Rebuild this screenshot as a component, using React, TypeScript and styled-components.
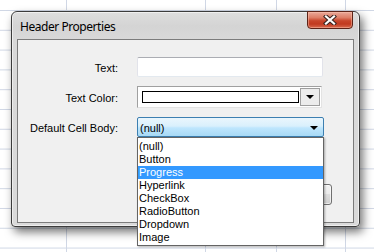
import React from 'react';
import styled, { createGlobalStyle } from 'styled-components';

const GRID = '#d0d7e5';

const GlobalStyle = createGlobalStyle`
  html, body {
    margin: 0;
    padding: 0;
    width: 374px;
    height: 252px;
    overflow: hidden;
  }
  body {
    font-family: "Liberation Sans", Arial, sans-serif;
    font-size: 11px;
    color: #000;
  }
`;

const items = ['(null)', 'Button', 'Progress', 'Hyperlink', 'CheckBox', 'RadioButton', 'Dropdown', 'Image'];

function vline(x: number) {
  return `linear-gradient(to right, transparent ${x}px, ${GRID} ${x}px, ${GRID} ${x + 1}px, transparent ${x + 1}px)`;
}

export default function App() {
  return (
    <>
      <GlobalStyle />
      <Sheet>
        <Window>
          <TitleBar>
            <Title>Header Properties</Title>
            <CloseButton aria-label="Close">
              <svg width="14" height="10" viewBox="0 0 14 10">
                <path d="M3 1.5 L11 8.5 M11 1.5 L3 8.5" stroke="#3a2420" strokeWidth="4.2" strokeLinecap="square" fill="none" />
                <path d="M3 1.5 L11 8.5 M11 1.5 L3 8.5" stroke="#ffffff" strokeWidth="2.2" strokeLinecap="square" fill="none" />
              </svg>
            </CloseButton>
          </TitleBar>
          <Client>
            <Form>
              <Label>Text:</Label>
              <TextInput />
              <Label>Text Color:</Label>
              <ColorCombo>
                <ColorField>
                  <Swatch />
                </ColorField>
                <ComboButton>
                  <Arrow />
                </ComboButton>
              </ColorCombo>
              <Label>Default Cell Body:</Label>
              <SelectWrap>
                <Select>
                  <span>(null)</span>
                  <Arrow />
                </Select>
                <List>
                  {items.map((item) => (
                    <Item key={item} selected={item === 'Progress'}>
                      {item}
                    </Item>
                  ))}
                </List>
              </SelectWrap>
            </Form>
            <Footer>
              <PushButton>OK</PushButton>
              <PushButton>Cancel</PushButton>
            </Footer>
          </Client>
        </Window>
      </Sheet>
    </>
  );
}

const Sheet = styled.div`
  width: 374px;
  height: 252px;
  box-sizing: border-box;
  padding: 11px 0 0 11px;
  background-color: #fff;
  background-image: ${vline(66)}, ${vline(205)}, ${vline(276)}, ${vline(345)},
    linear-gradient(to bottom, ${GRID} 1px, transparent 1px);
  background-size: 100% 100%, 100% 100%, 100% 100%, 100% 100%, 100% 19.8px;
  background-position: 0 0, 0 0, 0 0, 0 0, 0 10px;
`;

const Window = styled.div`
  width: 349px;
  height: 216px;
  box-sizing: border-box;
  display: flex;
  flex-direction: column;
  border: 1px solid #3c3c3c;
  border-radius: 6px 6px 4px 4px;
  background: linear-gradient(to bottom, #dedede 0px, #d4d4d4 14px, #d9d9d9 28px, #dadada 100%);
  box-shadow: inset 0 0 0 1px rgba(255, 255, 255, 0.55), 3px 5px 10px rgba(0, 0, 0, 0.55);
`;

const TitleBar = styled.div`
  height: 27px;
  display: flex;
  align-items: flex-start;
  padding-left: 8px;
`;

const Title = styled.div`
  font-family: "Noto Sans", "Open Sans", sans-serif;
  font-size: 12px;
  line-height: 15px;
  padding-top: 7px;
  color: #000;
  letter-spacing: -0.45px;
`;

const CloseButton = styled.div`
  margin: -1px 6px 0 auto;
  width: 46px;
  height: 18px;
  box-sizing: border-box;
  display: flex;
  align-items: center;
  justify-content: center;
  border: 1px solid #5c2318;
  border-radius: 0 0 4px 4px;
  background: linear-gradient(
    to bottom,
    #e9a99a 0%,
    #dd7e67 35%,
    #c8452b 55%,
    #c13a20 75%,
    #d86a4f 100%
  );
  box-shadow: inset 0 0 0 1px rgba(255, 200, 180, 0.45);
`;

const Client = styled.div`
  flex: 1;
  margin: 0 5px 3px 5px;
  display: flex;
  flex-direction: column;
  border: 1px solid #7c7c7c;
  background: #f0f0f0;
`;

const Form = styled.div`
  display: grid;
  grid-template-columns: 100px auto;
  column-gap: 19px;
  row-gap: 9px;
  align-items: center;
  justify-items: start;
  padding-top: 17px;
`;

const Label = styled.div`
  justify-self: end;
  font-size: 11px;
  line-height: 13px;
  padding-top: 2px;
  white-space: nowrap;
`;

const TextInput = styled.div`
  width: 186px;
  height: 20px;
  box-sizing: border-box;
  background: #fff;
  border: 1px solid #e2e3ea;
  border-top-color: #abadb3;
  border-bottom-color: #e3e9ef;
  border-radius: 2px;
`;

const ColorCombo = styled.div`
  width: 185px;
  height: 22px;
  box-sizing: border-box;
  display: flex;
  align-items: stretch;
  background: #fff;
  border: 1px solid #a0a0a0;
  border-right-color: #e3e3e3;
  border-bottom-color: #e3e3e3;
`;

const ColorField = styled.div`
  flex: 1;
  display: flex;
  align-items: center;
  padding-left: 4px;
`;

const Swatch = styled.div`
  width: 157px;
  height: 12px;
  box-sizing: border-box;
  border: 1px solid #000;
  background: #fff;
`;

const ComboButton = styled.div`
  width: 18px;
  margin: 1px 1px 1px 0;
  display: flex;
  align-items: center;
  justify-content: center;
  background: #ececec;
  border: 1px solid #9e9e9e;
`;

const Arrow = styled.div`
  width: 0;
  height: 0;
  border-left: 4px solid transparent;
  border-right: 4px solid transparent;
  border-top: 4px solid #000;
`;

const SelectWrap = styled.div`
  position: relative;
`;

const Select = styled.div`
  width: 187px;
  height: 20px;
  box-sizing: border-box;
  display: flex;
  align-items: center;
  justify-content: space-between;
  padding: 1px 5px 0 2px;
  border: 1px solid #3c7fb1;
  border-radius: 2px;
  background: linear-gradient(to bottom, #eaf6fd 0%, #d9f0fc 45%, #bee6fd 55%, #a7d9f5 100%);
  font-size: 11px;
`;

const List = styled.div`
  position: absolute;
  top: 100%;
  left: 0;
  width: 187px;
  box-sizing: border-box;
  padding: 2px 0 1px;
  background: #fff;
  border: 1px solid #646464;
  box-shadow: 1px 1px 2px rgba(0, 0, 0, 0.3);
  z-index: 2;
`;

const Item = styled.div<{ selected?: boolean }>`
  height: 13px;
  line-height: 13px;
  padding-left: 1px;
  font-size: 11px;
  white-space: nowrap;
  background: ${(p) => (p.selected ? '#3399ff' : 'transparent')};
  color: ${(p) => (p.selected ? '#fff' : '#000')};
`;

const Footer = styled.div`
  margin-top: auto;
  display: flex;
  justify-content: flex-end;
  gap: 6px;
  padding: 0 21px 17px 0;
`;

const PushButton = styled.div`
  width: 75px;
  height: 21px;
  box-sizing: border-box;
  display: flex;
  align-items: center;
  justify-content: center;
  border: 1px solid #707070;
  border-radius: 3px;
  background: linear-gradient(to bottom, #f2f2f2 0%, #ebebeb 50%, #dddddd 50%, #cfcfcf 100%);
  box-shadow: inset 0 0 0 1px rgba(255, 255, 255, 0.6);
  font-size: 11px;
`;
